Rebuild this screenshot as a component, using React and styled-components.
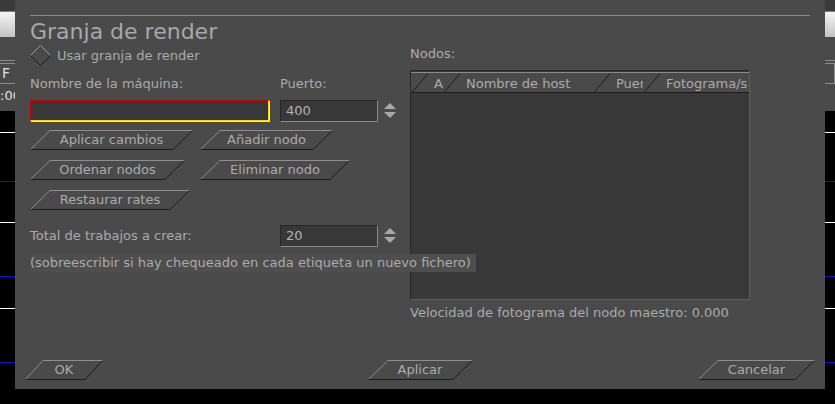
import React from "react";
import styled, { createGlobalStyle } from "styled-components";

const GlobalStyle = createGlobalStyle`
  html, body {
    margin: 0;
    padding: 0;
    background: #000;
  }
  body {
    font-family: "DejaVu Sans", "Liberation Sans", sans-serif;
    font-size: 13px;
    color: #ababab;
  }
`;

// Slanted bevel button, drawn as a parallelogram outline
function SlantButton({ label, width, slant = 20, place }) {
  const h = 20;
  return (
    <ButtonShell $w={width} $place={place} type="button">
      <svg width={width} height={h} aria-hidden="true">
        <line x1={slant} y1={0.5} x2={width} y2={0.5} stroke="#8e8e8e" />
        <line x1={0.5} y1={h - 0.5} x2={slant} y2={0.5} stroke="#8e8e8e" />
        <line x1={0.5} y1={h - 0.5} x2={width - slant} y2={h - 0.5} stroke="#1c1c1c" />
        <line x1={width - slant} y1={h - 0.5} x2={width - 0.5} y2={0.5} stroke="#1c1c1c" />
      </svg>
      <ButtonText>{label}</ButtonText>
    </ButtonShell>
  );
}

function Spinner() {
  return (
    <SpinWrap>
      <svg width="14" height="18" aria-hidden="true">
        <polygon points="7,1 13,7 1,7" fill="#a8a8a8" />
        <polygon points="1,10 13,10 7,16" fill="#a8a8a8" />
      </svg>
    </SpinWrap>
  );
}

function Diamond() {
  return (
    <svg width="21" height="21" aria-hidden="true">
      <line x1="0.5" y1="10.5" x2="10.5" y2="0.5" stroke="#9a9a9a" />
      <line x1="10.5" y1="0.5" x2="20.5" y2="10.5" stroke="#9a9a9a" />
      <line x1="20.5" y1="10.5" x2="10.5" y2="20.5" stroke="#1a1a1a" />
      <line x1="10.5" y1="20.5" x2="0.5" y2="10.5" stroke="#1a1a1a" />
    </svg>
  );
}

const columns = [
  { label: "Activo", w: 32 },
  { label: "Nombre de host", w: 150 },
  { label: "Puerto", w: 50 },
  { label: "Fotograma/s", w: 106 },
];

const tracks = [
  { h: 21, line: "#ffffff" },
  { h: 48, line: "#1010d0" },
  { h: 40, line: "#ffffff" },
  { h: 53, line: "#1010d0" },
  { h: 31, line: "#ffffff" },
  { h: 53, line: "#1010d0" },
];

export default function App() {
  return (
    <Screen>
      <GlobalStyle />
      <Backdrop>
        <TopStrip />
        <Toolbar />
        <Panel>
          <PanelRule />
          <PanelField>F</PanelField>
          <PanelTime>:00</PanelTime>
        </Panel>
        <Timeline>
          {tracks.map((t, i) => (
            <Track key={i} $h={t.h} $line={t.line} />
          ))}
        </Timeline>
      </Backdrop>

      <Dialog>
        <Separator />
        <Title>Granja de render</Title>
        <Body>
          <LeftCol>
            <CheckRow>
              <Diamond />
              <span>Usar granja de render</span>
            </CheckRow>
            <FieldGrid>
              <Label>Nombre de la máquina:</Label>
              <Label>Puerto:</Label>
            </FieldGrid>
            <InputGrid>
              <MachineInput />
              <SpinRow>
                <NumberBox>400</NumberBox>
                <Spinner />
              </SpinRow>
            </InputGrid>
            <ButtonGrid>
              <SlantButton label="Aplicar cambios" width={163} />
              <SlantButton label="Añadir nodo" width={133} />
              <SlantButton label="Ordenar nodos" width={155} />
              <SlantButton label="Eliminar nodo" width={150} />
              <SlantButton label="Restaurar rates" width={160} />
            </ButtonGrid>
            <TotalRow>
              <Label>Total de trabajos a crear:</Label>
              <SpinRow>
                <NumberBox>20</NumberBox>
                <Spinner />
              </SpinRow>
            </TotalRow>
            <Note>(sobreescribir si hay chequeado en cada etiqueta un nuevo fichero)</Note>
          </LeftCol>

          <RightCol>
            <Label>Nodos:</Label>
            <NodeList>
              <ListHeader>
                {columns.map((c) => (
                  <HeaderCell key={c.label} $w={c.w}>
                    <svg width="18" height="20" aria-hidden="true">
                      <line x1="1" y1="19.5" x2="17" y2="0.5" stroke="#1e1e1e" />
                    </svg>
                    <HeaderText>{c.label}</HeaderText>
                  </HeaderCell>
                ))}
              </ListHeader>
            </NodeList>
            <Speed>Velocidad de fotograma del nodo maestro: 0.000</Speed>
          </RightCol>
        </Body>
        <Footer>
          <SlantButton label="OK" width={78} slant={18} place="start" />
          <SlantButton label="Aplicar" width={105} place="center" />
          <SlantButton label="Cancelar" width={117} place="end" />
        </Footer>
      </Dialog>
    </Screen>
  );
}

const Screen = styled.div`
  position: relative;
  width: 835px;
  height: 404px;
  overflow: hidden;
  background: #000;
`;

const Backdrop = styled.div`
  display: flex;
  flex-direction: column;
  height: 100%;
`;

const TopStrip = styled.div`
  height: 11px;
  background: #3a3a3a;
  border-bottom: 1px solid #d86010;
`;

const Toolbar = styled.div`
  height: 25px;
  background: linear-gradient(#f4f4f4, #c4c4c4);
`;

const Panel = styled.div`
  height: 74px;
  background: #4a4a4a;
  display: flex;
  flex-direction: column;
  color: #e0e0e0;
`;

const PanelRule = styled.div`
  height: 1px;
  margin-top: 23px;
  background: #8c8c8c;
`;

const PanelField = styled.div`
  height: 19px;
  margin-top: 2px;
  border: 1px solid #8c8c8c;
  border-left: none;
  padding-left: 2px;
  font-size: 14px;
  line-height: 19px;
`;

const PanelTime = styled.div`
  font-size: 13px;
  line-height: 16px;
  margin-top: 4px;
`;

const Timeline = styled.div`
  flex: 1;
  background: #000;
`;

const Track = styled.div`
  height: ${(p) => p.$h}px;
  border-bottom: 1px solid ${(p) => p.$line};
`;

const Dialog = styled.div`
  position: absolute;
  top: 0;
  left: 15px;
  width: 810px;
  height: 389px;
  box-sizing: border-box;
  padding: 15px 15px 0 15px;
  background: #4a4a4a;
  display: flex;
  flex-direction: column;
`;

const Separator = styled.div`
  height: 1px;
  background: #8a8a8a;
`;

const Title = styled.div`
  margin-top: 3px;
  font-size: 22px;
  line-height: 26px;
  color: #a8a8a8;
`;

const Body = styled.div`
  display: flex;
`;

const LeftCol = styled.div`
  width: 380px;
  display: flex;
  flex-direction: column;
`;

const RightCol = styled.div`
  width: 340px;
  display: flex;
  flex-direction: column;
  padding-top: 1px;
`;

const Label = styled.div`
  line-height: 16px;
  white-space: nowrap;
`;

const CheckRow = styled.div`
  height: 20px;
  display: flex;
  align-items: center;
  gap: 6px;
`;

const FieldGrid = styled.div`
  margin-top: 11px;
  display: grid;
  grid-template-columns: 250px auto;
`;

const InputGrid = styled.div`
  margin-top: 8px;
  display: grid;
  grid-template-columns: 250px auto;
`;

const MachineInput = styled.div`
  width: 239px;
  height: 21px;
  box-sizing: border-box;
  background: #383838;
  border-top: 1px solid #c80000;
  border-left: 1px solid #c80000;
  border-right: 1px solid #ffd800;
  border-bottom: 1px solid #ffd800;
  box-shadow: 1px 1px 0 #f4f0c0;
`;

const SpinRow = styled.div`
  display: flex;
  align-items: center;
`;

const NumberBox = styled.div`
  width: 98px;
  height: 22px;
  box-sizing: border-box;
  padding-left: 5px;
  background: #383838;
  border-top: 1px solid #262626;
  border-left: 1px solid #262626;
  border-right: 1px solid #8a8a8a;
  border-bottom: 1px solid #8a8a8a;
  line-height: 20px;
  font-size: 13px;
  color: #b4b4b4;
`;

const SpinWrap = styled.div`
  margin-left: 5px;
  display: flex;
`;

const ButtonGrid = styled.div`
  margin-top: 8px;
  display: grid;
  grid-template-columns: 170px auto;
  row-gap: 10px;
  justify-items: start;
`;

const ButtonShell = styled.button`
  position: relative;
  justify-self: ${(p) => p.$place || "start"};
  width: ${(p) => p.$w}px;
  height: 20px;
  padding: 0;
  border: none;
  background: transparent;
  font: inherit;
  color: #ababab;
  display: flex;
  align-items: center;
  justify-content: center;

  svg {
    position: absolute;
    left: 0;
    top: 0;
  }
`;

const ButtonText = styled.span`
  position: relative;
  line-height: 16px;
  white-space: nowrap;
`;

const TotalRow = styled.div`
  margin-top: 15px;
  display: grid;
  grid-template-columns: 250px auto;
  align-items: center;
`;

const Note = styled.div`
  position: relative;
  z-index: 2;
  align-self: flex-start;
  margin-top: 7px;
  padding-right: 5px;
  line-height: 18px;
  white-space: nowrap;
  background: #4e4e4e;
`;

const NodeList = styled.div`
  margin-top: 8px;
  height: 230px;
  box-sizing: border-box;
  background: #383838;
  border-top: 1px solid #262626;
  border-left: 1px solid #262626;
  border-right: 1px solid #5e5e5e;
  border-bottom: 1px solid #5e5e5e;
  overflow: hidden;
`;

const ListHeader = styled.div`
  display: flex;
  margin-top: 1px;
  height: 21px;
  box-sizing: border-box;
  background: #4a4a4a;
  border-top: 1px solid #8a8a8a;
  border-bottom: 1px solid #1c1c1c;
`;

const HeaderCell = styled.div`
  flex: none;
  width: ${(p) => p.$w}px;
  display: flex;
  align-items: center;
  overflow: hidden;

  svg {
    flex: none;
  }
`;

const HeaderText = styled.span`
  margin-left: 5px;
  padding-top: 2px;
  white-space: nowrap;
  line-height: 16px;
`;

const Speed = styled.div`
  margin-top: 5px;
  line-height: 16px;
  white-space: nowrap;
`;

const Footer = styled.div`
  margin: auto -5px 0 -5px;
  padding-bottom: 9px;
  display: grid;
  grid-template-columns: 1fr auto 1fr;
  align-items: center;
`;
